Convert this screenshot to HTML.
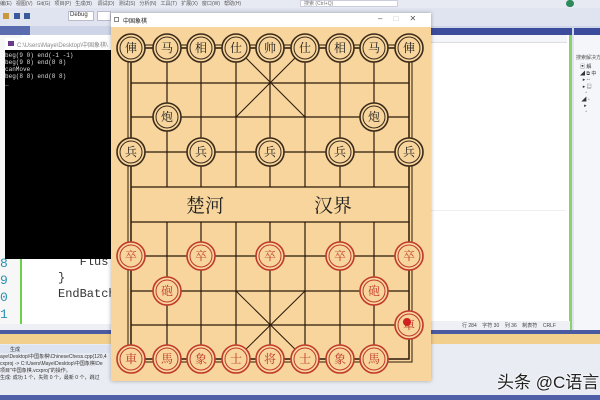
<!DOCTYPE html>
<html><head><meta charset="utf-8"><style>
*{margin:0;padding:0;box-sizing:border-box}
body{width:600px;height:400px;overflow:hidden;position:relative;background:#dfe3ee;font-family:"Liberation Sans","Noto Sans CJK SC",sans-serif}
.a{position:absolute}
.t{font-size:6px;color:#333;white-space:nowrap}
</style></head><body>
<!-- menu bar -->
<div class="a" style="left:0;top:0;width:600px;height:8px;background:#e8eaf3"></div>
<div class="a t" style="left:0;top:0;font-size:5px;color:#555">编(E)&nbsp;&nbsp;&nbsp;视图(V)&nbsp;&nbsp;&nbsp;Git(G)&nbsp;&nbsp;&nbsp;项目(P)&nbsp;&nbsp;&nbsp;生成(B)&nbsp;&nbsp;&nbsp;&nbsp;调试(D)&nbsp;&nbsp;&nbsp;测试(S)&nbsp;&nbsp;&nbsp;分析(N)&nbsp;&nbsp;&nbsp;工具(T)&nbsp;&nbsp;&nbsp;扩展(X)&nbsp;&nbsp;&nbsp;窗口(W)&nbsp;&nbsp;&nbsp;帮助(H)</div>
<div class="a" style="left:300px;top:0;width:98px;height:7px;background:#fff;border:1px solid #ccd"></div>
<div class="a t" style="left:304px;top:0;font-size:5px;color:#777">搜索 (Ctrl+Q)</div>
<div class="a" style="left:566px;top:0;width:8px;height:7px;border-radius:4px;background:#2d8a5a"></div>
<!-- toolbar -->
<div class="a" style="left:0;top:8px;width:600px;height:18px;background:#e0e4f0"></div>
<div class="a" style="left:68px;top:11px;width:26px;height:10px;background:#fff;border:1px solid #bbc"></div>
<div class="a t" style="left:70px;top:12px;font-size:6px">Debug</div>
<div class="a" style="left:97px;top:11px;width:14px;height:10px;background:#fff;border:1px solid #bbc"></div>
<div class="a" style="left:3px;top:13px;width:6px;height:6px;background:#c99a3a"></div>
<div class="a" style="left:14px;top:13px;width:6px;height:6px;background:#3a5a9a"></div>
<div class="a" style="left:24px;top:13px;width:6px;height:6px;background:#3a5a9a"></div>
<!-- tab row -->
<div class="a" style="left:0;top:26px;width:600px;height:9px;background:#cfd5e8"></div>
<div class="a" style="left:0;top:26px;width:30px;height:9px;background:#5b6bb0"></div>
<div class="a" style="left:430px;top:28px;width:142px;height:7px;background:#3c4c9c"></div>
<div class="a" style="left:574px;top:28px;width:26px;height:7px;background:#3c4c9c"></div>
<!-- editor right -->
<div class="a" style="left:430px;top:35px;width:142px;height:295px;background:#fff;border-right:3px solid #8ad26a"></div>
<div class="a" style="left:430px;top:35px;width:137px;height:8px;background:#f4f5f8;border-bottom:1px solid #ddd"></div>
<div class="a" style="left:430px;top:210px;width:135px;height:1px;background:#eee"></div>
<div class="a" style="left:430px;top:321px;width:140px;height:9px;background:#eef0f6"></div>
<div class="a t" style="left:462px;top:322px;font-size:5px;color:#444">行 284&nbsp;&nbsp;&nbsp;&nbsp;字符 30&nbsp;&nbsp;&nbsp;&nbsp;列 36&nbsp;&nbsp;&nbsp;&nbsp;制表符&nbsp;&nbsp;&nbsp;&nbsp;CRLF</div>
<!-- solution explorer -->
<div class="a" style="left:574px;top:35px;width:26px;height:295px;background:#f5f6fa"></div>
<div class="a t" style="left:576px;top:54px;font-size:5px;color:#555">搜索解决方</div>
<div class="a t" style="left:580px;top:63px;font-size:5px;color:#333">▣ 解<br>◢ ⧉ 中<br>&nbsp;&nbsp;▸ ◦◦<br>&nbsp;&nbsp;▸ ▤<br>&nbsp;&nbsp;&nbsp;&nbsp;▫<br>&nbsp;◢ ▫<br>&nbsp;&nbsp;&nbsp;▸<br>&nbsp;&nbsp;&nbsp;&nbsp;▫</div>
<!-- left code editor -->
<div class="a" style="left:0;top:35px;width:111px;height:290px;background:#fff"></div>
<div class="a" style="left:0;top:35px;width:22px;height:290px;background:#f7f7f7"></div>
<div class="a" style="left:20px;top:258px;width:2px;height:67px;background:#6ad04a"></div>
<div class="a" style="left:0;top:255px;font-family:'Liberation Mono',monospace;font-size:13px;line-height:17px;color:#2b91af">8<br>9<br>0<br>1</div>
<div class="a" style="left:58px;top:254px;font-family:'Liberation Mono',monospace;font-size:12px;line-height:16px;color:#333;white-space:pre">   Flus
}
EndBatch</div>
<div class="a" style="left:0;top:324px;width:111px;height:6px;background:#eef0f6"></div>
<!-- console -->
<div class="a" style="left:5px;top:38px;width:106px;height:221px;background:#000"></div>
<div class="a" style="left:5px;top:38px;width:106px;height:12px;background:#fff"></div>
<div class="a" style="left:8px;top:41px;width:6px;height:5px;background:#6a3a8a"></div>
<div class="a t" style="left:17px;top:40px;font-size:6px;color:#888">C:\Users\Maye\Desktop\中国象棋\</div>
<div class="a" style="left:5px;top:52px;font-family:'Liberation Mono',monospace;font-size:6px;line-height:7px;color:#ddd;white-space:pre">beg(9 0) end(-1 -1)
beg(9 8) end(8 8)
canMove
beg(8 8) end(8 8)
_</div>
<!-- status & output bottom -->
<div class="a" style="left:0;top:330px;width:600px;height:4px;background:#4a5aa0"></div>
<div class="a" style="left:0;top:334px;width:600px;height:10px;background:#f3cf8e"></div>
<div class="a" style="left:0;top:344px;width:600px;height:56px;background:#e9ecf3"></div>
<div class="a" style="left:0;top:345px;width:110px;height:8px;background:#dde3f0"></div>
<div class="a t" style="left:10px;top:346px;font-size:5px">生成</div>
<div class="a" style="left:0;top:354px;font-size:5px;line-height:7px;color:#333;white-space:pre">aye\Desktop\中国象棋\ChineseChess.cpp(120,4
cxproj -> C:\Users\Maye\Desktop\中国象棋\De
项目"中国象棋.vcxproj"的操作。
生成: 成功 1 个，失败 0 个，最新 0 个，跳过</div>
<div class="a" style="left:0;top:395px;width:600px;height:5px;background:#5060a8"></div>
<div class="a" style="left:497px;top:368px;font-size:17px;color:#222;white-space:nowrap;text-shadow:0 0 2px #fff,0 0 2px #fff">头条 @C语言</div>

<!-- chess window -->
<div class="a" style="left:111px;top:13px;width:320px;height:368px;background:#f7d59c;box-shadow:0 0 4px rgba(0,0,0,.3)"></div>
<div class="a" style="left:111px;top:13px;width:320px;height:14px;background:#fff"></div>
<div class="a" style="left:114px;top:17px;width:5px;height:5px;border:1px solid #888"></div>
<div class="a t" style="left:123px;top:16px;font-size:6px;color:#222">中国象棋</div>
<div class="a t" style="left:378px;top:14px;font-size:8px;color:#555">–&nbsp;&nbsp;&nbsp;&nbsp;&nbsp;<span style="color:#bbb">□</span>&nbsp;&nbsp;&nbsp;&nbsp;&nbsp;✕</div>
<svg class="a" style="left:0;top:0" width="600" height="400" viewBox="0 0 600 400">
<g stroke="#2a1a0a" stroke-width="1.2" fill="none">
<rect x="131" y="48" width="278" height="311" stroke-width="1.5"/>
<rect x="128" y="45" width="284" height="317" stroke-width="1"/>
<path d="M131 83H409M131 117H409M131 152H409M131 187H409M131 222H409M131 256H409M131 291H409M131 325H409"/>
<path d="M167 48V187M201 48V187M236 48V187M270 48V187M305 48V187M340 48V187M374 48V187"/>
<path d="M167 222V359M201 222V359M236 222V359M270 222V359M305 222V359M340 222V359M374 222V359"/>
<path d="M236 48L305 117M305 48L236 117M236 291L305 359M305 291L236 359" stroke-width="1"/>
</g>
<g font-family="'Liberation Serif','Noto Serif CJK SC',serif" font-size="19" fill="#222">
<text x="186" y="212">楚河</text><text x="314" y="212">汉界</text>
</g>
<defs>
<g id="pb"><circle r="14" fill="#f7d59c" stroke="#3a2a1a" stroke-width="1.6"/><circle r="11" fill="#f7d59c" stroke="#3a2a1a" stroke-width="1"/></g>
<g id="pr"><circle r="14" fill="#f7d59c" stroke="#c0392b" stroke-width="1.6"/><circle r="11" fill="#f7d59c" stroke="#c0392b" stroke-width="1"/></g>
</defs>
<g font-family="'Noto Serif CJK SC',serif" font-size="12" text-anchor="middle">
<g fill="#222">
<use href="#pb" x="131" y="48"/><text x="131" y="52">俥</text>
<use href="#pb" x="167" y="48"/><text x="167" y="52">马</text>
<use href="#pb" x="201" y="48"/><text x="201" y="52">相</text>
<use href="#pb" x="236" y="48"/><text x="236" y="52">仕</text>
<use href="#pb" x="270" y="48"/><text x="270" y="52">帅</text>
<use href="#pb" x="305" y="48"/><text x="305" y="52">仕</text>
<use href="#pb" x="340" y="48"/><text x="340" y="52">相</text>
<use href="#pb" x="374" y="48"/><text x="374" y="52">马</text>
<use href="#pb" x="409" y="48"/><text x="409" y="52">俥</text>
<use href="#pb" x="167" y="117"/><text x="167" y="121">炮</text>
<use href="#pb" x="374" y="117"/><text x="374" y="121">炮</text>
<use href="#pb" x="131" y="152"/><text x="131" y="156">兵</text>
<use href="#pb" x="201" y="152"/><text x="201" y="156">兵</text>
<use href="#pb" x="270" y="152"/><text x="270" y="156">兵</text>
<use href="#pb" x="340" y="152"/><text x="340" y="156">兵</text>
<use href="#pb" x="409" y="152"/><text x="409" y="156">兵</text>
</g>
<g fill="#c0392b">
<use href="#pr" x="131" y="256"/><text x="131" y="260">卒</text>
<use href="#pr" x="201" y="256"/><text x="201" y="260">卒</text>
<use href="#pr" x="270" y="256"/><text x="270" y="260">卒</text>
<use href="#pr" x="340" y="256"/><text x="340" y="260">卒</text>
<use href="#pr" x="409" y="256"/><text x="409" y="260">卒</text>
<use href="#pr" x="167" y="291"/><text x="167" y="295">砲</text>
<use href="#pr" x="374" y="291"/><text x="374" y="295">砲</text>
<use href="#pr" x="409" y="325"/><text x="409" y="329">車</text>
<use href="#pr" x="131" y="359"/><text x="131" y="363">車</text>
<use href="#pr" x="167" y="359"/><text x="167" y="363">馬</text>
<use href="#pr" x="201" y="359"/><text x="201" y="363">象</text>
<use href="#pr" x="236" y="359"/><text x="236" y="363">士</text>
<use href="#pr" x="270" y="359"/><text x="270" y="363">将</text>
<use href="#pr" x="305" y="359"/><text x="305" y="363">士</text>
<use href="#pr" x="340" y="359"/><text x="340" y="363">象</text>
<use href="#pr" x="374" y="359"/><text x="374" y="363">馬</text>
</g>
</g>
<circle cx="407" cy="322" r="4" fill="#d02020"/>
</svg>
</body></html>
